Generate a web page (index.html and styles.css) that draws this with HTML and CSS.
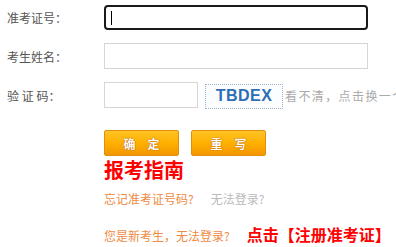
FILE: index.html
```html
<!DOCTYPE html>
<html lang="zh-CN">
<head>
  <meta charset="UTF-8" />
  <meta name="viewport" content="width=device-width, initial-scale=1.0"/>
  <title>考生登录</title>
  <link rel="stylesheet" href="styles.css">
</head>
<body>

  <form class="login">
    <div class="row">
      <label class="label" for="zkzh">准考证号：</label>
      <span class="field focused"><input class="input wide" id="zkzh" type="text"/></span>
    </div>
    <div class="row">
      <label class="label" for="ksxm">考生姓名：</label>
      <input class="input wide" id="ksxm" type="text"/>
    </div>
    <div class="row">
      <label class="label" for="yzm">验 证 码：</label>
      <input class="input short" id="yzm" type="text"/>
      <span class="captcha">TBDEX</span>
      <span class="refresh">看不清，点击换一个</span>
    </div>

    <div class="buttons">
      <button class="btn" type="submit">确　定</button>
      <button class="btn" type="reset">重　写</button>
    </div>

    <div class="guide">报考指南</div>

    <div class="links">
      <a class="orange" href="#">忘记准考证号码?</a>
      <a class="grey" href="#">无法登录?</a>
    </div>
    <div class="links last">
      <a class="orange" href="#">您是新考生，无法登录?</a>
      <a class="register" href="#">点击【注册准考证】</a>
    </div>
  </form>

</body>
</html>
```

FILE: styles.css
```css
* {
  box-sizing: border-box;
}

body {
  margin: 0;
  background: #fff;
  font-family: "Noto Sans CJK SC", "Noto Sans", sans-serif;
  font-size: 12px;
  color: #555;
  overflow: hidden;
}

.login {
  padding-top: 4px;
  width: 396px;
}

.row {
  display: flex;
  align-items: center;
  height: 26px;
  margin-bottom: 13px;
  white-space: nowrap;
}

.label {
  width: 104px;
  padding-left: 7px;
  flex-shrink: 0;
  color: #555;
}

.input {
  height: 26px;
  border: 1px solid #d6d6d6;
  background: #fff;
  padding: 0 6px;
  font-size: 12px;
  outline: none;
}

.wide {
  width: 264px;
}

.short {
  width: 94px;
}

.field {
  position: relative;
  display: block;
}

.focused .input {
  height: 25px;
  border: 2px solid #1a1a1a;
  border-radius: 4px;
}

.focused::after {
  content: "";
  position: absolute;
  left: 7px;
  top: 6px;
  width: 1px;
  height: 14px;
  background: #000;
}

.captcha {
  margin-left: 7px;
  margin-top: 2px;
  width: 78px;
  height: 25px;
  border: 1px dotted #9fb4cc;
  background: #fbfdff;
  color: #2d6db5;
  font-family: "Liberation Sans", Arial, sans-serif;
  font-weight: bold;
  font-size: 16px;
  letter-spacing: 0.5px;
  display: flex;
  align-items: center;
  justify-content: center;
  flex-shrink: 0;
}

.refresh {
  margin-left: 2px;
  color: #aaa;
  letter-spacing: 1.4px;
}

.buttons {
  display: flex;
  gap: 12px;
  margin: 22px 0 0 104px;
}

.btn {
  width: 75px;
  height: 26px;
  border: 1px solid #e0900c;
  border-radius: 2px;
  background: linear-gradient(#ffc426, #ffb000 50%, #f29600);
  color: #fff;
  font-family: "Noto Sans CJK SC", sans-serif;
  font-weight: bold;
  font-size: 12px;
  text-shadow: 0 0 1px #b35a00, 0 0 1px #b35a00;
  padding: 0;
}

.guide {
  margin: 3px 0 0 104px;
  color: #f00;
  font-size: 20px;
  font-weight: bold;
  line-height: 22px;
}

.links {
  margin: 8px 0 0 104px;
  display: flex;
  align-items: baseline;
  white-space: nowrap;
  line-height: 20px;
}

.links.last {
  margin-top: 15px;
}

.links a {
  text-decoration: none;
}

.orange {
  color: #f08a44;
}

.grey {
  color: #bbb;
  margin-left: 17px;
}

.register {
  color: #f00;
  font-size: 16px;
  font-weight: bold;
  margin-left: 17px;
}
```
